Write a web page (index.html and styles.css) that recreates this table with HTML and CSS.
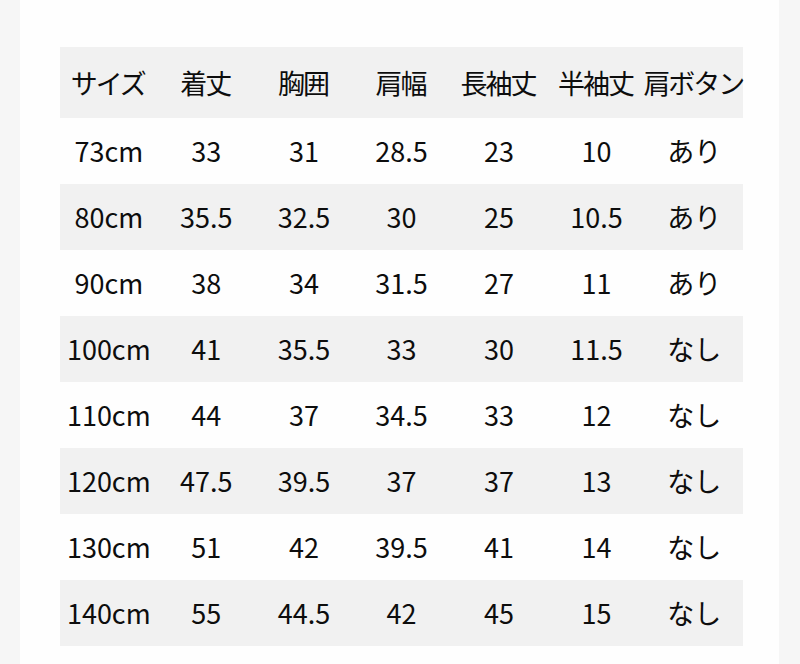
FILE: index.html
```html
<!DOCTYPE html>
<html lang="ja">
<head>
<meta charset="utf-8">
<title>サイズ表</title>
<link rel="stylesheet" href="styles.css">
</head>
<body>
<div class="card">
  <table class="size-table">
    <thead>
      <tr class="shade">
        <th>サイズ</th><th>着丈</th><th>胸囲</th><th>肩幅</th><th>長袖丈</th><th>半袖丈</th><th>肩ボタン</th>
      </tr>
    </thead>
    <tbody>
      <tr><td>73cm</td><td>33</td><td>31</td><td>28.5</td><td>23</td><td>10</td><td>あり</td></tr>
      <tr class="shade"><td>80cm</td><td>35.5</td><td>32.5</td><td>30</td><td>25</td><td>10.5</td><td>あり</td></tr>
      <tr><td>90cm</td><td>38</td><td>34</td><td>31.5</td><td>27</td><td>11</td><td>あり</td></tr>
      <tr class="shade"><td>100cm</td><td>41</td><td>35.5</td><td>33</td><td>30</td><td>11.5</td><td>なし</td></tr>
      <tr><td>110cm</td><td>44</td><td>37</td><td>34.5</td><td>33</td><td>12</td><td>なし</td></tr>
      <tr class="shade"><td>120cm</td><td>47.5</td><td>39.5</td><td>37</td><td>37</td><td>13</td><td>なし</td></tr>
      <tr><td>130cm</td><td>51</td><td>42</td><td>39.5</td><td>41</td><td>14</td><td>なし</td></tr>
      <tr class="shade"><td>140cm</td><td>55</td><td>44.5</td><td>42</td><td>45</td><td>15</td><td>なし</td></tr>
    </tbody>
  </table>
</div>
</body>
</html>
```
FILE: styles.css
```css
html, body {
  margin: 0;
  padding: 0;
  background: #f6f6f6;
  font-family: "Noto Sans CJK JP", "Noto Sans", sans-serif;
  color: #0d0d0d;
}

.card {
  margin: 0 21px 0 20px;
  background: #fefefe;
  height: 664px;
  padding: 47px 0 0 40px;
  box-sizing: border-box;
}

.size-table {
  width: 683px;
  table-layout: fixed;
  border-collapse: collapse;
}

.size-table th,
.size-table td {
  padding: 0;
  text-align: center;
  vertical-align: middle;
  white-space: nowrap;
  font-weight: 400;
}

.size-table th {
  height: 71px;
  font-size: 27px;
  letter-spacing: -2px;
  text-indent: -2px;
}

.size-table td {
  height: 64px;
  font-size: 27px;
  padding-bottom: 2px;
}

.size-table .shade {
  background: #f1f1f1;
}
```
